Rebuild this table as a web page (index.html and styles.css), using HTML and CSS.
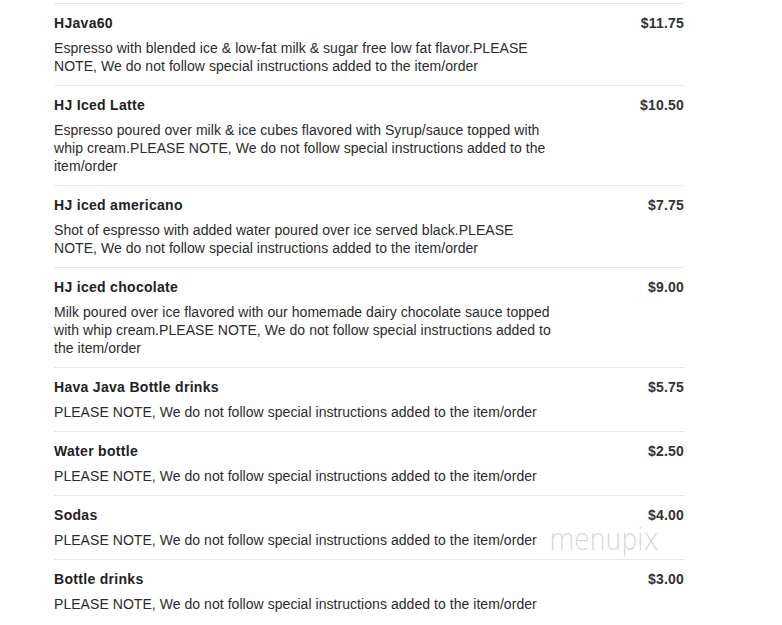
FILE: index.html
```html
<!DOCTYPE html>
<html>
<head>
<meta charset="utf-8">
<link rel="stylesheet" href="styles.css">
</head>
<body>
<div class="menu">
  <div class="item">
    <div class="info">
      <div class="name">HJava60</div>
      <div class="desc">Espresso with blended ice &amp; low-fat milk &amp; sugar free low fat flavor.PLEASE NOTE, We do not follow special instructions added to the item/order</div>
    </div>
    <div class="price">$11.75</div>
  </div>
  <div class="item">
    <div class="info">
      <div class="name">HJ Iced Latte</div>
      <div class="desc">Espresso poured over milk &amp; ice cubes flavored with Syrup/sauce topped with whip cream.PLEASE NOTE, We do not follow special instructions added to the item/order</div>
    </div>
    <div class="price">$10.50</div>
  </div>
  <div class="item">
    <div class="info">
      <div class="name">HJ iced americano</div>
      <div class="desc">Shot of espresso with added water poured over ice served black.PLEASE NOTE, We do not follow special instructions added to the item/order</div>
    </div>
    <div class="price">$7.75</div>
  </div>
  <div class="item">
    <div class="info">
      <div class="name">HJ iced chocolate</div>
      <div class="desc">Milk poured over ice flavored with our homemade dairy chocolate sauce topped with whip cream.PLEASE NOTE, We do not follow special instructions added to the item/order</div>
    </div>
    <div class="price">$9.00</div>
  </div>
  <div class="item">
    <div class="info">
      <div class="name">Hava Java Bottle drinks</div>
      <div class="desc">PLEASE NOTE, We do not follow special instructions added to the item/order</div>
    </div>
    <div class="price">$5.75</div>
  </div>
  <div class="item">
    <div class="info">
      <div class="name">Water bottle</div>
      <div class="desc">PLEASE NOTE, We do not follow special instructions added to the item/order</div>
    </div>
    <div class="price">$2.50</div>
  </div>
  <div class="item">
    <div class="info">
      <div class="name">Sodas</div>
      <div class="desc">PLEASE NOTE, We do not follow special instructions added to the item/order</div>
    </div>
    <div class="price">$4.00</div>
    <div class="watermark">menupix</div>
  </div>
  <div class="item">
    <div class="info">
      <div class="name">Bottle drinks</div>
      <div class="desc">PLEASE NOTE, We do not follow special instructions added to the item/order</div>
    </div>
    <div class="price">$3.00</div>
  </div>
</div>
</body>
</html>
```
FILE: styles.css
```css
html, body {
  margin: 0;
  padding: 0;
  background: #fff;
}
body {
  font-family: "Liberation Sans", Arial, sans-serif;
  color: #333;
  overflow: hidden;
}
.menu {
  margin: 3px 0 0 54px;
  width: 631px;
}
.item {
  position: relative;
  display: flex;
  justify-content: space-between;
  align-items: flex-start;
  border-top: 1px solid #e6e6e6;
  padding: 10px 1px 10px 0;
}
.info {
  width: 502px;
}
.name {
  font-size: 14px;
  font-weight: bold;
  line-height: 18px;
  letter-spacing: 0.3px;
  color: #222;
  margin-bottom: 7px;
}
.desc {
  font-size: 14px;
  line-height: 18px;
  letter-spacing: 0.05px;
  color: #2b2b2b;
}
.price {
  font-size: 14px;
  font-weight: bold;
  line-height: 18px;
  letter-spacing: 0.2px;
  color: #333;
}
.watermark {
  position: absolute;
  left: 495px;
  top: 29px;
  font-family: "DejaVu Sans", sans-serif;
  font-weight: 200;
  font-size: 30px;
  line-height: 1;
  letter-spacing: -1px;
  transform: scaleX(0.88);
  transform-origin: left top;
  color: #d6d6d6;
}
```
